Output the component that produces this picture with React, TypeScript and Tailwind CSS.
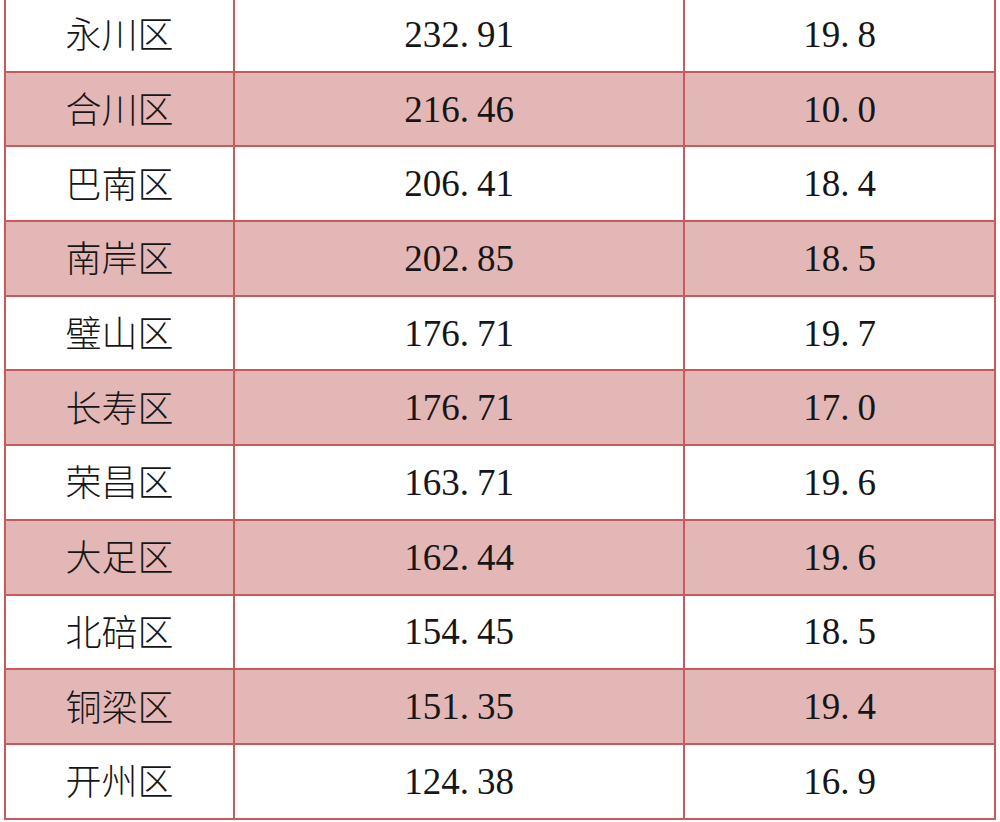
import React from "react";

const rows = [
  { name: "永川区", area: "232.91", rate: "19.8" },
  { name: "合川区", area: "216.46", rate: "10.0" },
  { name: "巴南区", area: "206.41", rate: "18.4" },
  { name: "南岸区", area: "202.85", rate: "18.5" },
  { name: "璧山区", area: "176.71", rate: "19.7" },
  { name: "长寿区", area: "176.71", rate: "17.0" },
  { name: "荣昌区", area: "163.71", rate: "19.6" },
  { name: "大足区", area: "162.44", rate: "19.6" },
  { name: "北碚区", area: "154.45", rate: "18.5" },
  { name: "铜梁区", area: "151.35", rate: "19.4" },
  { name: "开州区", area: "124.38", rate: "16.9" },
];

// full-width style period like the source document: dot then a gap
const Num = ({ value }: { value: string }) => {
  const [a, b] = value.split(".");
  return (
    <span className="font-['Liberation_Serif',serif] text-[37px]">
      {a}.<span className="inline-block w-[8px]" />
      {b}
    </span>
  );
};

const App = () => {
  return (
    <div className="h-[822px] w-[1000px] overflow-hidden bg-white">
      <table className="-mt-[4px] ml-[4px] w-[990px] table-fixed border-collapse text-[36px] leading-none text-[#161616]">
        <colgroup>
          <col className="w-[229px]" />
          <col className="w-[450px]" />
          <col className="w-[311px]" />
        </colgroup>
        <tbody>
          {rows.map((row, i) => (
            <tr
              key={row.name}
              className={`h-[74.7px] ${i % 2 === 1 ? "bg-[#e4b7b7]" : "bg-white"}`}
            >
              <td className="border-[2.5px] border-[#c95a5a] pb-[4px] text-center font-['Noto_Sans_CJK_SC',sans-serif] font-light">
                {row.name}
              </td>
              <td className="border-[2.5px] border-[#c95a5a] text-center">
                <Num value={row.area} />
              </td>
              <td className="border-[2.5px] border-[#c95a5a] text-center">
                <Num value={row.rate} />
              </td>
            </tr>
          ))}
        </tbody>
      </table>
    </div>
  );
};

export default App;
